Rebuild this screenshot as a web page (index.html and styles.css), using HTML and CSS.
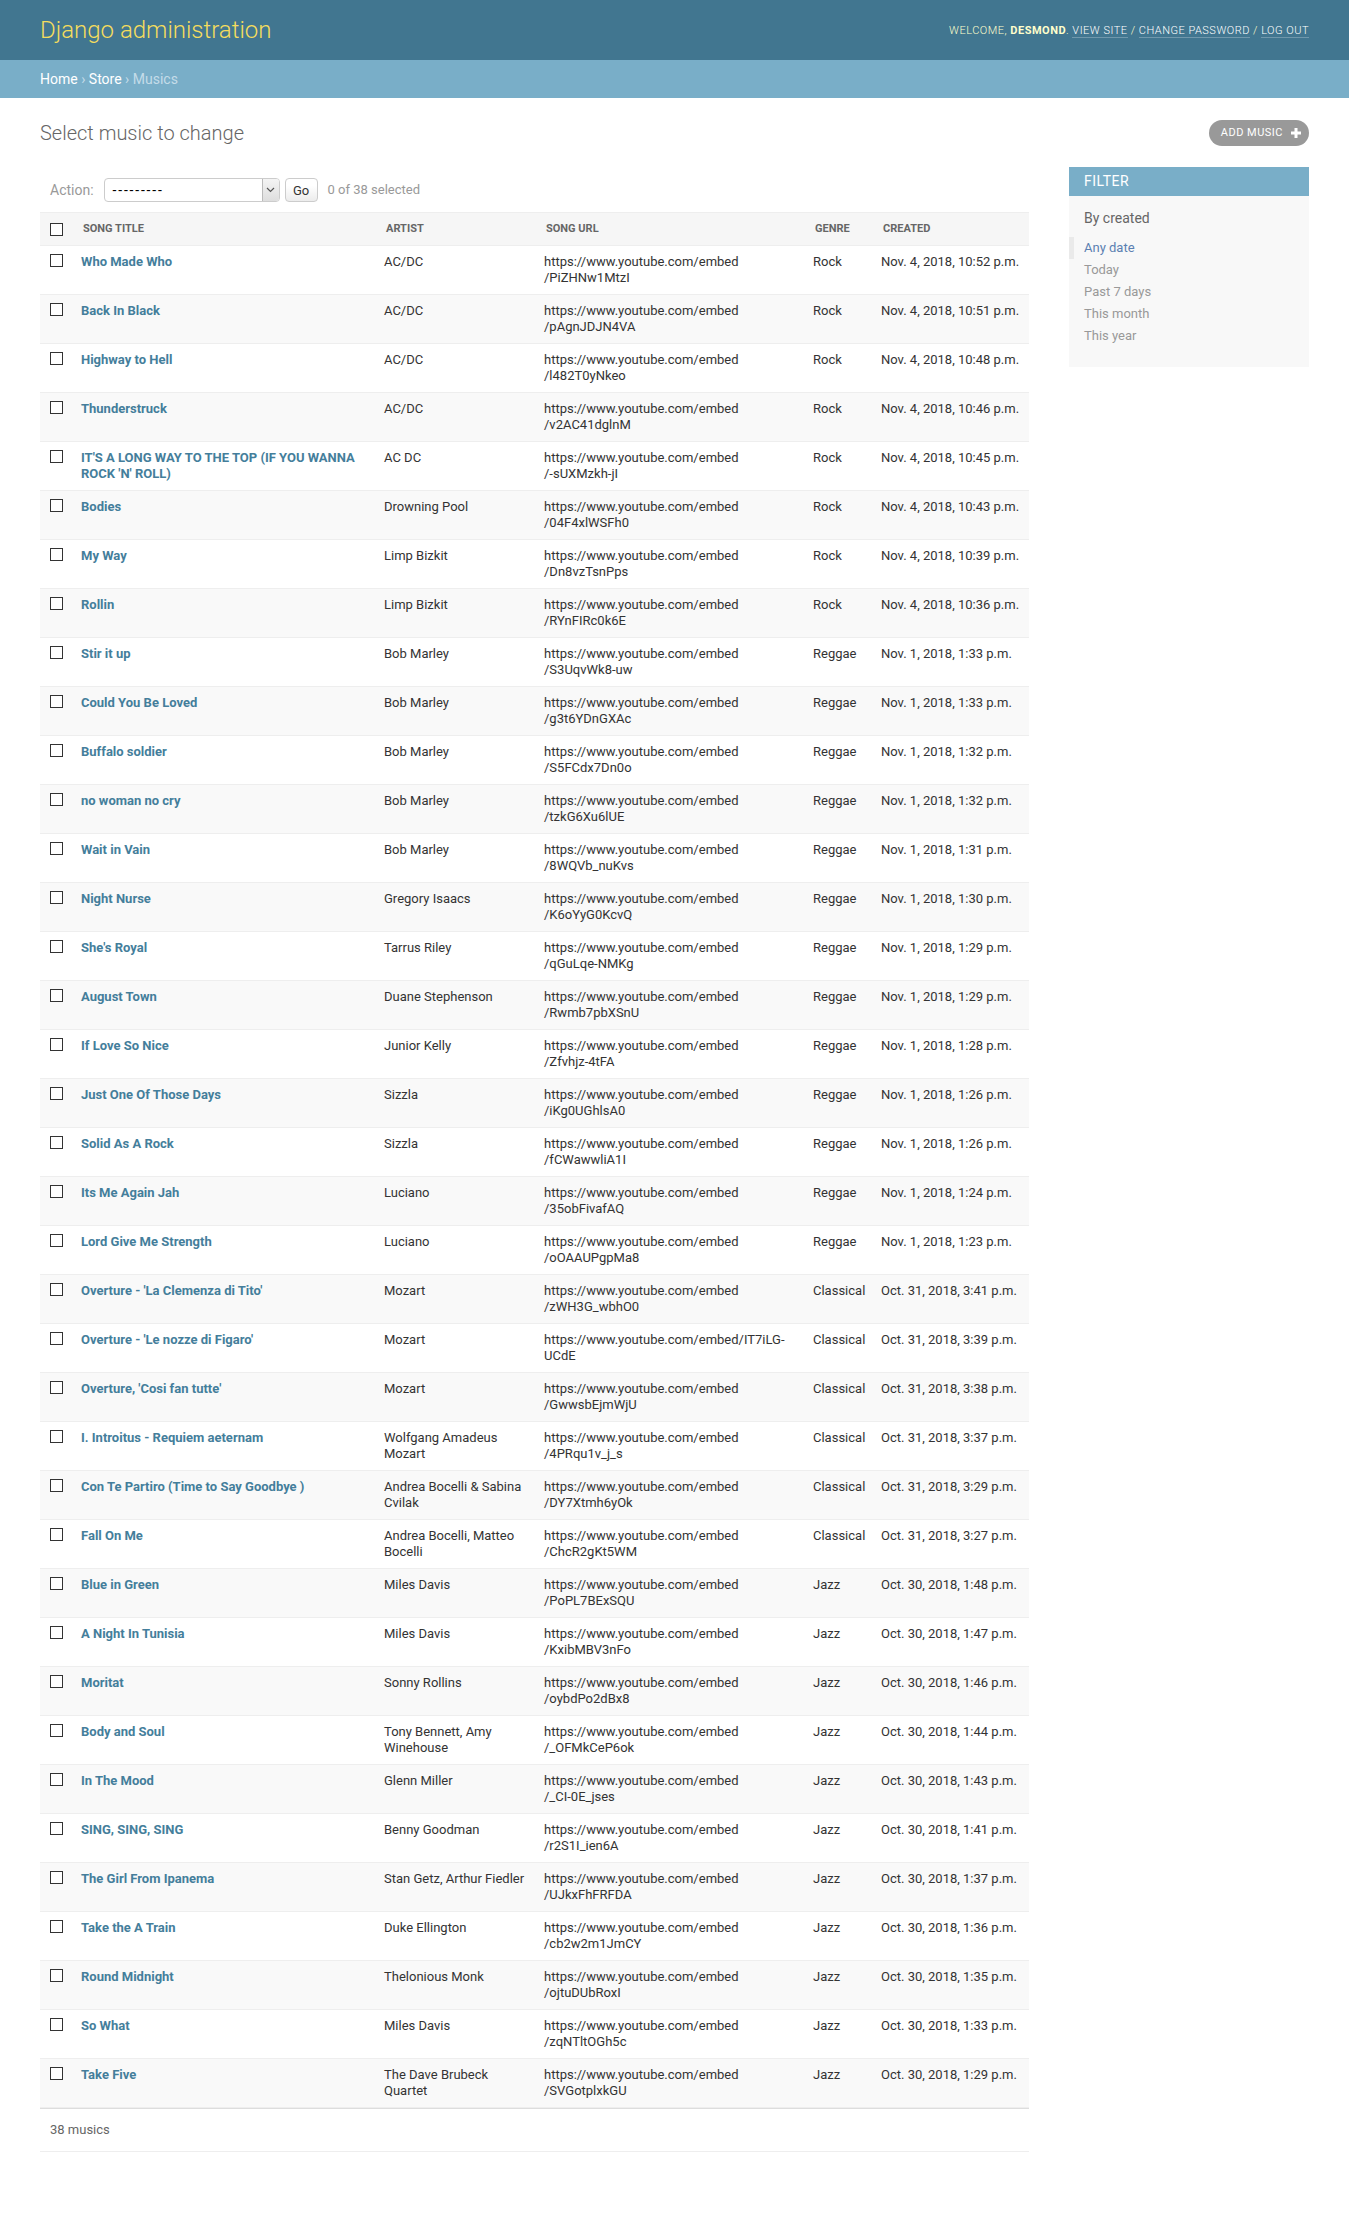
FILE: index.html
```html
<!DOCTYPE html>
<html lang="en">
<head>
<meta charset="utf-8">
<title>Select music to change | Django site admin</title>
<link rel="stylesheet" href="styles.css">
</head>
<body>
<div class="header">
  <div class="branding"><h1 class="site-name">Django administration</h1></div>
  <div class="user-tools">Welcome, <strong>desmond</strong>. <a href="#">View site</a> / <a href="#">Change password</a> / <a href="#">Log out</a></div>
</div>
<div class="breadcrumbs"><a href="#">Home</a> › <a href="#">Store</a> › Musics</div>
<div class="content">
  <div class="title-row">
    <h1 class="page-title">Select music to change</h1>
    <a class="addlink" href="#">Add music <svg class="plus" width="10" height="10" viewBox="0 0 10 10"><rect x="3.5" y="0" width="3" height="10" fill="#fff"/><rect x="0" y="3.5" width="10" height="3" fill="#fff"/></svg></a>
  </div>
  <div class="changelist">
    <div class="results-col">
      <div class="actions">
        <span class="action-label">Action:</span>
        <span class="select"><span class="select-text">---------</span><span class="select-arrow"><svg width="9" height="6" viewBox="0 0 9 6"><path d="M1 1l3.5 3.5L8 1" fill="none" stroke="#555" stroke-width="1.2"/></svg></span></span>
        <button class="go" type="button">Go</button>
        <span class="counter">0 of 38 selected</span>
      </div>
      <table class="results">
        <colgroup>
          <col class="c-cb"><col class="c-title"><col class="c-artist"><col class="c-url"><col class="c-genre"><col class="c-created">
        </colgroup>
        <thead>
          <tr>
            <th class="cb-col"><input type="checkbox" class="checkbox"></th>
            <th>Song title</th>
            <th>Artist</th>
            <th>Song url</th>
            <th>Genre</th>
            <th>Created</th>
          </tr>
        </thead>
        <tbody>
          <tr><td class="cb-cell"><input type="checkbox" class="checkbox"></td><th><a href="#">Who Made Who</a></th><td>AC/DC</td><td>https://www.youtube.com/embed<br>/PiZHNw1MtzI</td><td>Rock</td><td class="date">Nov. 4, 2018, 10:52 p.m.</td></tr>
          <tr><td class="cb-cell"><input type="checkbox" class="checkbox"></td><th><a href="#">Back In Black</a></th><td>AC/DC</td><td>https://www.youtube.com/embed<br>/pAgnJDJN4VA</td><td>Rock</td><td class="date">Nov. 4, 2018, 10:51 p.m.</td></tr>
          <tr><td class="cb-cell"><input type="checkbox" class="checkbox"></td><th><a href="#">Highway to Hell</a></th><td>AC/DC</td><td>https://www.youtube.com/embed<br>/l482T0yNkeo</td><td>Rock</td><td class="date">Nov. 4, 2018, 10:48 p.m.</td></tr>
          <tr><td class="cb-cell"><input type="checkbox" class="checkbox"></td><th><a href="#">Thunderstruck</a></th><td>AC/DC</td><td>https://www.youtube.com/embed<br>/v2AC41dglnM</td><td>Rock</td><td class="date">Nov. 4, 2018, 10:46 p.m.</td></tr>
          <tr><td class="cb-cell"><input type="checkbox" class="checkbox"></td><th><a href="#">IT'S A LONG WAY TO THE TOP (IF YOU WANNA<br>ROCK 'N' ROLL)</a></th><td>AC DC</td><td>https://www.youtube.com/embed<br>/-sUXMzkh-jI</td><td>Rock</td><td class="date">Nov. 4, 2018, 10:45 p.m.</td></tr>
          <tr><td class="cb-cell"><input type="checkbox" class="checkbox"></td><th><a href="#">Bodies</a></th><td>Drowning Pool</td><td>https://www.youtube.com/embed<br>/04F4xlWSFh0</td><td>Rock</td><td class="date">Nov. 4, 2018, 10:43 p.m.</td></tr>
          <tr><td class="cb-cell"><input type="checkbox" class="checkbox"></td><th><a href="#">My Way</a></th><td>Limp Bizkit</td><td>https://www.youtube.com/embed<br>/Dn8vzTsnPps</td><td>Rock</td><td class="date">Nov. 4, 2018, 10:39 p.m.</td></tr>
          <tr><td class="cb-cell"><input type="checkbox" class="checkbox"></td><th><a href="#">Rollin</a></th><td>Limp Bizkit</td><td>https://www.youtube.com/embed<br>/RYnFIRc0k6E</td><td>Rock</td><td class="date">Nov. 4, 2018, 10:36 p.m.</td></tr>
          <tr><td class="cb-cell"><input type="checkbox" class="checkbox"></td><th><a href="#">Stir it up</a></th><td>Bob Marley</td><td>https://www.youtube.com/embed<br>/S3UqvWk8-uw</td><td>Reggae</td><td class="date">Nov. 1, 2018, 1:33 p.m.</td></tr>
          <tr><td class="cb-cell"><input type="checkbox" class="checkbox"></td><th><a href="#">Could You Be Loved</a></th><td>Bob Marley</td><td>https://www.youtube.com/embed<br>/g3t6YDnGXAc</td><td>Reggae</td><td class="date">Nov. 1, 2018, 1:33 p.m.</td></tr>
          <tr><td class="cb-cell"><input type="checkbox" class="checkbox"></td><th><a href="#">Buffalo soldier</a></th><td>Bob Marley</td><td>https://www.youtube.com/embed<br>/S5FCdx7Dn0o</td><td>Reggae</td><td class="date">Nov. 1, 2018, 1:32 p.m.</td></tr>
          <tr><td class="cb-cell"><input type="checkbox" class="checkbox"></td><th><a href="#">no woman no cry</a></th><td>Bob Marley</td><td>https://www.youtube.com/embed<br>/tzkG6Xu6lUE</td><td>Reggae</td><td class="date">Nov. 1, 2018, 1:32 p.m.</td></tr>
          <tr><td class="cb-cell"><input type="checkbox" class="checkbox"></td><th><a href="#">Wait in Vain</a></th><td>Bob Marley</td><td>https://www.youtube.com/embed<br>/8WQVb_nuKvs</td><td>Reggae</td><td class="date">Nov. 1, 2018, 1:31 p.m.</td></tr>
          <tr><td class="cb-cell"><input type="checkbox" class="checkbox"></td><th><a href="#">Night Nurse</a></th><td>Gregory Isaacs</td><td>https://www.youtube.com/embed<br>/K6oYyG0KcvQ</td><td>Reggae</td><td class="date">Nov. 1, 2018, 1:30 p.m.</td></tr>
          <tr><td class="cb-cell"><input type="checkbox" class="checkbox"></td><th><a href="#">She's Royal</a></th><td>Tarrus Riley</td><td>https://www.youtube.com/embed<br>/qGuLqe-NMKg</td><td>Reggae</td><td class="date">Nov. 1, 2018, 1:29 p.m.</td></tr>
          <tr><td class="cb-cell"><input type="checkbox" class="checkbox"></td><th><a href="#">August Town</a></th><td>Duane Stephenson</td><td>https://www.youtube.com/embed<br>/Rwmb7pbXSnU</td><td>Reggae</td><td class="date">Nov. 1, 2018, 1:29 p.m.</td></tr>
          <tr><td class="cb-cell"><input type="checkbox" class="checkbox"></td><th><a href="#">If Love So Nice</a></th><td>Junior Kelly</td><td>https://www.youtube.com/embed<br>/Zfvhjz-4tFA</td><td>Reggae</td><td class="date">Nov. 1, 2018, 1:28 p.m.</td></tr>
          <tr><td class="cb-cell"><input type="checkbox" class="checkbox"></td><th><a href="#">Just One Of Those Days</a></th><td>Sizzla</td><td>https://www.youtube.com/embed<br>/iKg0UGhlsA0</td><td>Reggae</td><td class="date">Nov. 1, 2018, 1:26 p.m.</td></tr>
          <tr><td class="cb-cell"><input type="checkbox" class="checkbox"></td><th><a href="#">Solid As A Rock</a></th><td>Sizzla</td><td>https://www.youtube.com/embed<br>/fCWawwliA1I</td><td>Reggae</td><td class="date">Nov. 1, 2018, 1:26 p.m.</td></tr>
          <tr><td class="cb-cell"><input type="checkbox" class="checkbox"></td><th><a href="#">Its Me Again Jah</a></th><td>Luciano</td><td>https://www.youtube.com/embed<br>/35obFivafAQ</td><td>Reggae</td><td class="date">Nov. 1, 2018, 1:24 p.m.</td></tr>
          <tr><td class="cb-cell"><input type="checkbox" class="checkbox"></td><th><a href="#">Lord Give Me Strength</a></th><td>Luciano</td><td>https://www.youtube.com/embed<br>/oOAAUPgpMa8</td><td>Reggae</td><td class="date">Nov. 1, 2018, 1:23 p.m.</td></tr>
          <tr><td class="cb-cell"><input type="checkbox" class="checkbox"></td><th><a href="#">Overture - 'La Clemenza di Tito'</a></th><td>Mozart</td><td>https://www.youtube.com/embed<br>/zWH3G_wbhO0</td><td>Classical</td><td class="date">Oct. 31, 2018, 3:41 p.m.</td></tr>
          <tr><td class="cb-cell"><input type="checkbox" class="checkbox"></td><th><a href="#">Overture - 'Le nozze di Figaro'</a></th><td>Mozart</td><td>https://www.youtube.com/embed/IT7iLG-<br>UCdE</td><td>Classical</td><td class="date">Oct. 31, 2018, 3:39 p.m.</td></tr>
          <tr><td class="cb-cell"><input type="checkbox" class="checkbox"></td><th><a href="#">Overture, 'Cosi fan tutte'</a></th><td>Mozart</td><td>https://www.youtube.com/embed<br>/GwwsbEjmWjU</td><td>Classical</td><td class="date">Oct. 31, 2018, 3:38 p.m.</td></tr>
          <tr><td class="cb-cell"><input type="checkbox" class="checkbox"></td><th><a href="#">I. Introitus - Requiem aeternam</a></th><td>Wolfgang Amadeus<br>Mozart</td><td>https://www.youtube.com/embed<br>/4PRqu1v_j_s</td><td>Classical</td><td class="date">Oct. 31, 2018, 3:37 p.m.</td></tr>
          <tr><td class="cb-cell"><input type="checkbox" class="checkbox"></td><th><a href="#">Con Te Partiro (Time to Say Goodbye )</a></th><td>Andrea Bocelli &amp; Sabina<br>Cvilak</td><td>https://www.youtube.com/embed<br>/DY7Xtmh6yOk</td><td>Classical</td><td class="date">Oct. 31, 2018, 3:29 p.m.</td></tr>
          <tr><td class="cb-cell"><input type="checkbox" class="checkbox"></td><th><a href="#">Fall On Me</a></th><td>Andrea Bocelli, Matteo<br>Bocelli</td><td>https://www.youtube.com/embed<br>/ChcR2gKt5WM</td><td>Classical</td><td class="date">Oct. 31, 2018, 3:27 p.m.</td></tr>
          <tr><td class="cb-cell"><input type="checkbox" class="checkbox"></td><th><a href="#">Blue in Green</a></th><td>Miles Davis</td><td>https://www.youtube.com/embed<br>/PoPL7BExSQU</td><td>Jazz</td><td class="date">Oct. 30, 2018, 1:48 p.m.</td></tr>
          <tr><td class="cb-cell"><input type="checkbox" class="checkbox"></td><th><a href="#">A Night In Tunisia</a></th><td>Miles Davis</td><td>https://www.youtube.com/embed<br>/KxibMBV3nFo</td><td>Jazz</td><td class="date">Oct. 30, 2018, 1:47 p.m.</td></tr>
          <tr><td class="cb-cell"><input type="checkbox" class="checkbox"></td><th><a href="#">Moritat</a></th><td>Sonny Rollins</td><td>https://www.youtube.com/embed<br>/oybdPo2dBx8</td><td>Jazz</td><td class="date">Oct. 30, 2018, 1:46 p.m.</td></tr>
          <tr><td class="cb-cell"><input type="checkbox" class="checkbox"></td><th><a href="#">Body and Soul</a></th><td>Tony Bennett, Amy<br>Winehouse</td><td>https://www.youtube.com/embed<br>/_OFMkCeP6ok</td><td>Jazz</td><td class="date">Oct. 30, 2018, 1:44 p.m.</td></tr>
          <tr><td class="cb-cell"><input type="checkbox" class="checkbox"></td><th><a href="#">In The Mood</a></th><td>Glenn Miller</td><td>https://www.youtube.com/embed<br>/_CI-0E_jses</td><td>Jazz</td><td class="date">Oct. 30, 2018, 1:43 p.m.</td></tr>
          <tr><td class="cb-cell"><input type="checkbox" class="checkbox"></td><th><a href="#">SING, SING, SING</a></th><td>Benny Goodman</td><td>https://www.youtube.com/embed<br>/r2S1I_ien6A</td><td>Jazz</td><td class="date">Oct. 30, 2018, 1:41 p.m.</td></tr>
          <tr><td class="cb-cell"><input type="checkbox" class="checkbox"></td><th><a href="#">The Girl From Ipanema</a></th><td>Stan Getz, Arthur Fiedler</td><td>https://www.youtube.com/embed<br>/UJkxFhFRFDA</td><td>Jazz</td><td class="date">Oct. 30, 2018, 1:37 p.m.</td></tr>
          <tr><td class="cb-cell"><input type="checkbox" class="checkbox"></td><th><a href="#">Take the A Train</a></th><td>Duke Ellington</td><td>https://www.youtube.com/embed<br>/cb2w2m1JmCY</td><td>Jazz</td><td class="date">Oct. 30, 2018, 1:36 p.m.</td></tr>
          <tr><td class="cb-cell"><input type="checkbox" class="checkbox"></td><th><a href="#">Round Midnight</a></th><td>Thelonious Monk</td><td>https://www.youtube.com/embed<br>/ojtuDUbRoxI</td><td>Jazz</td><td class="date">Oct. 30, 2018, 1:35 p.m.</td></tr>
          <tr><td class="cb-cell"><input type="checkbox" class="checkbox"></td><th><a href="#">So What</a></th><td>Miles Davis</td><td>https://www.youtube.com/embed<br>/zqNTltOGh5c</td><td>Jazz</td><td class="date">Oct. 30, 2018, 1:33 p.m.</td></tr>
          <tr><td class="cb-cell"><input type="checkbox" class="checkbox"></td><th><a href="#">Take Five</a></th><td>The Dave Brubeck<br>Quartet</td><td>https://www.youtube.com/embed<br>/SVGotplxkGU</td><td>Jazz</td><td class="date">Oct. 30, 2018, 1:29 p.m.</td></tr>
        </tbody>
      </table>
      <p class="paginator">38 musics</p>
    </div>
    <div class="filter">
      <h2 class="filter-title">Filter</h2>
      <h3 class="filter-heading">By created</h3>
      <ul class="filter-list">
        <li class="selected"><a href="#">Any date</a></li>
        <li><a href="#">Today</a></li>
        <li><a href="#">Past 7 days</a></li>
        <li><a href="#">This month</a></li>
        <li><a href="#">This year</a></li>
      </ul>
    </div>
  </div>
</div>
</body>
</html>
```

FILE: styles.css
```css
body {
  margin: 0;
  padding: 0;
  font-family: Roboto, "Liberation Sans", Arial, sans-serif;
  font-size: 14px;
  color: #333;
  background: #fff;
}
a {
  color: #447e9b;
  text-decoration: none;
}

/* Header */
.header {
  height: 60px;
  box-sizing: border-box;
  padding: 0 40px;
  background: #417690;
  color: #ffc;
  display: flex;
  justify-content: space-between;
  align-items: center;
}
.site-name {
  margin: 0;
  font-size: 24px;
  font-weight: 300;
  line-height: 28px;
  color: #f5dd5d;
}
.user-tools {
  font-size: 11px;
  font-weight: 300;
  letter-spacing: 0.5px;
  text-transform: uppercase;
  color: #ffc;
}
.user-tools strong {
  font-weight: 700;
}
.user-tools a {
  color: #fff;
  border-bottom: 1px solid rgba(255, 255, 255, 0.25);
}

/* Breadcrumbs */
.breadcrumbs {
  background: #79aec8;
  padding: 10px 40px;
  font-size: 14px;
  line-height: 18px;
  color: #c4dce8;
}
.breadcrumbs a {
  color: #fff;
}

/* Content */
.content {
  padding: 22px 40px 60px;
}
.title-row {
  display: flex;
  justify-content: space-between;
  align-items: center;
  margin-bottom: 21px;
}
.page-title {
  margin: 0;
  font-size: 20px;
  font-weight: 300;
  line-height: 24px;
  color: #666;
}
.addlink {
  display: flex;
  align-items: center;
  height: 26px;
  box-sizing: border-box;
  padding: 3px 8px 3px 12px;
  background: #999;
  color: #fff;
  border-radius: 15px;
  font-size: 11px;
  line-height: 20px;
  letter-spacing: 0.5px;
  text-transform: uppercase;
}
.plus {
  margin-left: 8px;
  display: block;
}

.changelist {
  display: flex;
  gap: 40px;
  align-items: flex-start;
}
.results-col {
  flex: 1;
  min-width: 0;
}

/* Actions */
.actions {
  display: flex;
  align-items: center;
  padding: 11px 10px 10px;
  line-height: 24px;
  height: 24px;
  color: #999;
  font-size: 14px;
}
.action-label {
  margin-right: 10px;
}
.select {
  width: 176px;
  height: 24px;
  box-sizing: border-box;
  border: 1px solid #ccc;
  border-radius: 4px;
  display: flex;
  align-items: stretch;
  background: #fff;
}
.select-text {
  flex: 1;
  padding-left: 8px;
  color: #000;
  font-size: 14px;
  line-height: 22px;
  letter-spacing: 1.8px;
}
.select-arrow {
  width: 16px;
  border-left: 1px solid #bbb;
  background: linear-gradient(#f4f4f4, #dedede);
  border-radius: 0 3px 3px 0;
  display: flex;
  align-items: center;
  justify-content: center;
}
.go {
  margin-left: 5px;
  width: 33px;
  height: 24px;
  padding: 0;
  border: 1px solid #ccc;
  border-radius: 4px;
  background: linear-gradient(#fff 30%, #ececec);
  font-family: Roboto, "Liberation Sans", Arial, sans-serif;
  font-size: 13px;
  color: #333;
}
.counter {
  margin-left: 10px;
  font-size: 13px;
  color: #999;
}

/* Table */
.results {
  width: 100%;
  border-collapse: collapse;
  table-layout: fixed;
}
.c-cb { width: 33px; }
.c-title { width: 303px; }
.c-artist { width: 160px; }
.c-url { width: 269px; }
.c-genre { width: 68px; }
.c-created { width: 156px; }

.results th,
.results td {
  font-size: 13px;
  line-height: 16px;
  padding: 8px;
  border-bottom: 1px solid #eee;
  vertical-align: top;
  text-align: left;
  white-space: nowrap;
}
.results thead th {
  font-size: 11px;
  font-weight: 700;
  color: #666;
  text-transform: uppercase;
  background: #f6f6f6;
  border-top: 1px solid #eee;
  padding: 8px 10px;
  vertical-align: middle;
}
.results thead th.cb-col,
.results td.cb-cell {
  padding-left: 0;
  padding-right: 0;
  text-align: center;
}
.results tbody th {
  font-weight: 700;
}
.results tbody tr:nth-child(even) {
  background: #f9f9f9;
}
.checkbox {
  -webkit-appearance: none;
  appearance: none;
  display: inline-block;
  width: 13px;
  height: 13px;
  margin: 0;
  box-sizing: border-box;
  border: 1px solid #333;
  background: #fff;
  vertical-align: top;
}
.results thead .checkbox {
  vertical-align: middle;
}

.paginator {
  margin: 0;
  padding: 10px;
  font-size: 13px;
  line-height: 22px;
  color: #666;
  border-top: 1px solid #ddd;
  border-bottom: 1px solid #eee;
}

/* Filter */
.filter {
  width: 240px;
  flex: none;
  background: #f8f8f8;
}
.filter-title {
  margin: 0 0 12px;
  padding: 5px 15px;
  background: #79aec8;
  color: #fff;
  font-size: 14px;
  font-weight: 400;
  line-height: 19px;
  letter-spacing: 0.5px;
  text-transform: uppercase;
}
.filter-heading {
  margin: 0 0 9px;
  padding: 0 15px;
  font-size: 14px;
  font-weight: 400;
  line-height: 20px;
  color: #666;
}
.filter-list {
  margin: 0 0 5px;
  padding: 0 15px 15px;
  list-style: none;
}
.filter-list li {
  font-size: 13px;
  line-height: 20px;
  padding: 1px 0;
}
.filter-list a {
  display: block;
  color: #999;
}
.filter-list li.selected {
  border-left: 5px solid #eaeaea;
  padding-left: 10px;
  margin-left: -15px;
}
.filter-list li.selected a {
  color: #5b80b2;
}
```
